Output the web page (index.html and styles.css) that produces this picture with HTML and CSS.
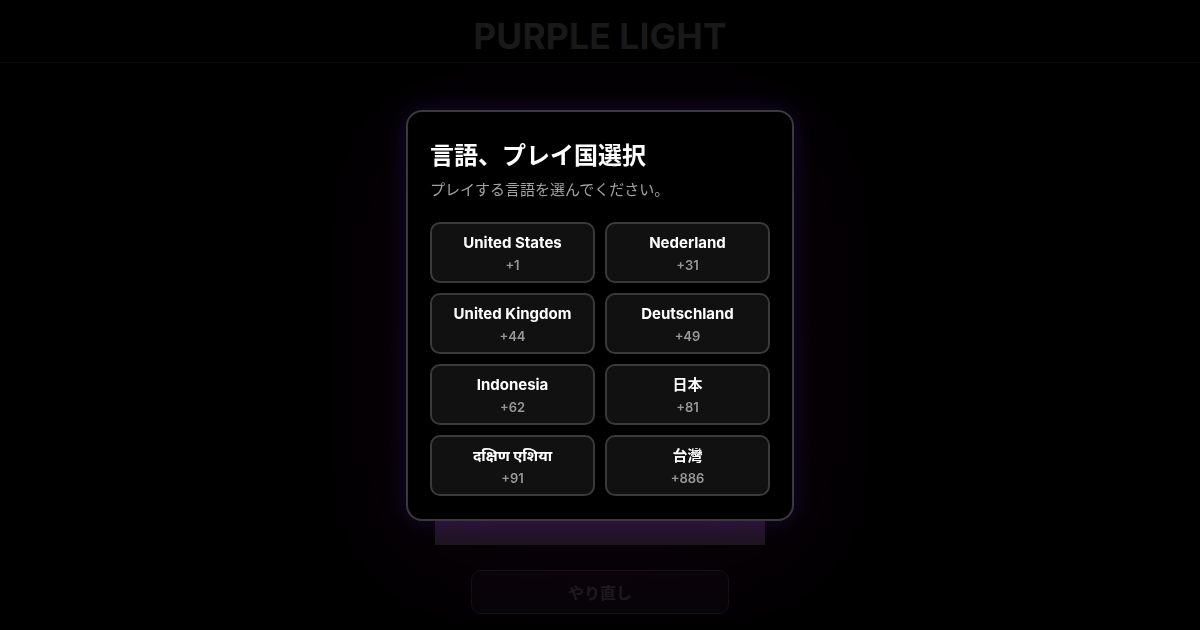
FILE: index.html
```html
<!DOCTYPE html>
<html lang="ja">
<head>
<meta charset="utf-8">
<title>PURPLE LIGHT</title>
<link rel="stylesheet" href="styles.css">
</head>
<body>
<header class="top">
  <h1 class="brand">PURPLE LIGHT</h1>
</header>
<main class="stage">
  <div class="board"></div>
  <button class="retry" type="button">やり直し</button>
</main>
<div class="overlay">
  <section class="modal">
    <h2 class="modal-title">言語、プレイ国選択</h2>
    <p class="modal-sub">プレイする言語を選んでください。</p>
    <div class="grid">
      <button class="card" type="button"><span class="name">United States</span><span class="code">+1</span></button>
      <button class="card" type="button"><span class="name">Nederland</span><span class="code">+31</span></button>
      <button class="card" type="button"><span class="name">United Kingdom</span><span class="code">+44</span></button>
      <button class="card" type="button"><span class="name">Deutschland</span><span class="code">+49</span></button>
      <button class="card" type="button"><span class="name">Indonesia</span><span class="code">+62</span></button>
      <button class="card" type="button"><span class="name">日本</span><span class="code">+81</span></button>
      <button class="card" type="button"><span class="name">दक्षिण एशिया</span><span class="code">+91</span></button>
      <button class="card" type="button"><span class="name">台灣</span><span class="code">+886</span></button>
    </div>
  </section>
</div>
</body>
</html>
```
FILE: styles.css
```css
* { box-sizing: border-box; }
html, body { margin: 0; padding: 0; }
body {
  width: 1200px;
  height: 630px;
  overflow: hidden;
  background: #000;
  font-family: Inter, "Noto Sans", "Noto Sans CJK JP", "Noto Sans Devanagari", sans-serif;
  color: #fff;
}
.top {
  height: 63px;
  border-bottom: 1px solid #0d0d0d;
  display: flex;
  align-items: center;
  justify-content: center;
}
.brand {
  margin: 0;
  font-size: 35.5px;
  font-weight: 700;
  letter-spacing: 0.1px;
  color: #1a1a1a;
  line-height: 1;
  padding-top: 11px;
}
.stage {
  display: flex;
  flex-direction: column;
  align-items: center;
  background: radial-gradient(ellipse 300px 240px at 600px 330px, rgba(50, 8, 30, 0.2), rgba(30, 4, 20, 0.08) 60%, rgba(0, 0, 0, 0) 100%);
  height: 567px;
}
.board {
  margin-top: 282px;
  width: 330px;
  height: 200px;
  background: linear-gradient(180deg, #160c1c 0%, #25122c 84%, #1c1720 100%);
}
.retry {
  margin-top: 25px;
  width: 258px;
  height: 44px;
  border: 1px solid #141014;
  border-radius: 10px;
  background: rgba(12, 8, 12, 0.5);
  color: #1e1b1e;
  font-family: inherit;
  font-size: 16px;
  font-weight: 700;
}
.overlay {
  position: fixed;
  inset: 0;
  display: flex;
  align-items: center;
  justify-content: center;
}
.modal {
  width: 388px;
  height: 411px;
  background: #000;
  border: 2px solid #3a3a3c;
  border-radius: 16px;
  padding: 28px 22px 22px;
  box-shadow: 0 0 22px 3px rgba(80, 40, 180, 0.2), 0 30px 120px 20px rgba(80, 15, 70, 0.14);
}
.modal-title {
  margin: 0 0 7px;
  font-size: 24px;
  line-height: 32px;
  font-weight: 700;
  color: #fff;
}
.modal-sub {
  margin: 0 0 21px;
  font-size: 15px;
  line-height: 22px;
  color: #a3a3a3;
}
.grid {
  display: grid;
  grid-template-columns: 1fr 1fr;
  column-gap: 10px;
  row-gap: 10px;
}
.card {
  height: 61px;
  background: #111;
  border: 2px solid #3a3a3a;
  border-radius: 10px;
  display: flex;
  flex-direction: column;
  align-items: center;
  justify-content: center;
  gap: 4px;
  font-family: inherit;
  padding: 2px 0 0;
}
.name {
  font-size: 15px;
  line-height: 20px;
  font-weight: 700;
  color: #fff;
}
.code {
  font-size: 13px;
  line-height: 16px;
  font-weight: 600;
  color: #979797;
}
```
